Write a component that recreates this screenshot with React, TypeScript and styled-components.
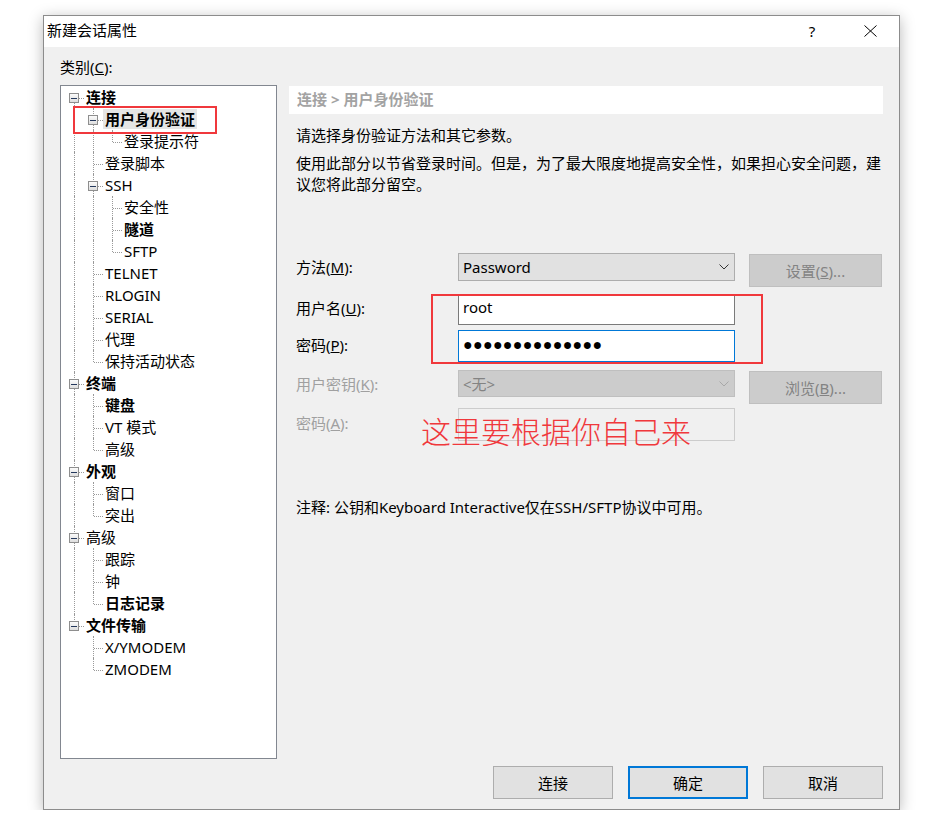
import React from "react";
import styled, { createGlobalStyle, css } from "styled-components";

const GlobalStyle = createGlobalStyle`
  html, body {
    margin: 0;
    padding: 0;
    background: #ffffff;
  }
  body {
    font-family: "Noto Sans", "Noto Sans CJK SC", sans-serif;
    font-size: 15px;
    color: #000000;
  }
`;

const Page = styled.div`
  padding: 15px 0 0 43px;
`;

const Window = styled.div`
  position: relative;
  width: 857px;
  box-sizing: border-box;
  border: 1px solid #8c8c8c;
  background: #f0f0f0;
  box-shadow: 0 3px 14px rgba(0, 0, 0, 0.28);
`;

const TitleBar = styled.div`
  display: flex;
  align-items: center;
  height: 31px;
  background: #ffffff;
  padding-left: 3px;
`;

const Title = styled.span`
  font-size: 15px;
  line-height: 20px;
  flex: 1;
  margin-bottom: 3px;
`;

const CaptionButton = styled.span`
  width: 58px;
  height: 31px;
  display: flex;
  align-items: center;
  justify-content: center;
  font-size: 15px;
  color: #000;
  padding-bottom: 2px;
  box-sizing: border-box;
`;

const Body = styled.div`
  display: grid;
  grid-template-columns: 217px 594px;
  grid-template-areas:
    "label ."
    "tree panel"
    "footer footer";
  column-gap: 12px;
  padding: 11px 15px 10px 16px;
`;

const CategoryLabel = styled.div`
  grid-area: label;
  line-height: 20px;
  height: 20px;
  margin-bottom: 7px;
  margin-top: -1px;
  padding-bottom: 1px;
`;

const TreeBox = styled.div`
  grid-area: tree;
  height: 674px;
  box-sizing: border-box;
  border: 1px solid #828790;
  background: #ffffff;
  padding: 0 0 0 4px;
`;

const TreeRow = styled.div`
  display: flex;
  align-items: center;
  height: 22px;
`;

const dotted = "1px dotted #9a9a9a";

const Guide = styled.span<{ $line: boolean }>`
  position: relative;
  flex: none;
  width: 19px;
  height: 22px;
  ${(p) =>
    p.$line &&
    css`
      &::before {
        content: "";
        position: absolute;
        left: 9px;
        top: 0;
        bottom: 0;
        border-left: ${dotted};
      }
    `}
`;

const Branch = styled.span<{ $up: boolean; $down: boolean }>`
  position: relative;
  flex: none;
  width: 19px;
  height: 22px;
  &::before {
    content: "";
    position: absolute;
    left: 9px;
    top: ${(p) => (p.$up ? "0" : "12px")};
    bottom: ${(p) => (p.$down ? "0" : "10px")};
    border-left: ${dotted};
  }
  &::after {
    content: "";
    position: absolute;
    left: 10px;
    right: 0;
    top: 12px;
    border-top: ${dotted};
  }
`;

const Expander = styled.span`
  position: absolute;
  z-index: 1;
  left: 4px;
  top: 7px;
  width: 10px;
  height: 10px;
  box-sizing: border-box;
  border: 1px solid #8e8e8e;
  background: linear-gradient(#fbfbfb, #dedede);
  &::after {
    content: "";
    position: absolute;
    left: 1px;
    right: 1px;
    top: 4px;
    border-top: 1px solid #24385c;
  }
`;

const NodeLabel = styled.span<{ $bold?: boolean; $selected?: boolean }>`
  padding: 0 2px;
  line-height: 20px;
  height: 20px;
  white-space: nowrap;
  font-weight: ${(p) => (p.$bold ? 700 : 400)};
  background: ${(p) => (p.$selected ? "#e5e5e5" : "transparent")};
`;

const Panel = styled.div`
  grid-area: panel;
  display: flex;
  flex-direction: column;
`;

const Breadcrumb = styled.div`
  height: 28px;
  line-height: 27px;
  background: #ffffff;
  padding-left: 8px;
  font-weight: 700;
  color: #a3a3a3;
  margin-top: 1px;
`;

const Para = styled.div<{ $top: number }>`
  margin-top: ${(p) => p.$top}px;
  padding-left: 7px;
  line-height: 21px;
  white-space: nowrap;
`;

const FormRow = styled.div<{ $top: number; $h: number }>`
  display: flex;
  align-items: flex-start;
  margin-top: ${(p) => p.$top}px;
  height: ${(p) => p.$h}px;
  padding-left: 7px;
`;

const FieldLabel = styled.span<{ $disabled?: boolean; $h: number }>`
  width: 162px;
  flex: none;
  line-height: ${(p) => p.$h}px;
  color: ${(p) => (p.$disabled ? "#a0a0a0" : "#000")};
`;

const Select = styled.div<{ $disabled?: boolean; $h: number }>`
  width: 277px;
  height: ${(p) => p.$h}px;
  box-sizing: border-box;
  display: flex;
  align-items: center;
  justify-content: space-between;
  padding: 0 5px 0 4px;
  border: 1px solid ${(p) => (p.$disabled ? "#bfbfbf" : "#adadad")};
  background: ${(p) => (p.$disabled ? "#cccccc" : "#e1e1e1")};
  color: ${(p) => (p.$disabled ? "#838383" : "#000")};
`;

const TextBox = styled.div<{ $h: number; $focused?: boolean; $disabled?: boolean }>`
  width: 277px;
  height: ${(p) => p.$h}px;
  box-sizing: border-box;
  padding: 0 4px;
  line-height: 22px;
  border: 1px solid
    ${(p) => (p.$focused ? "#0078d7" : p.$disabled ? "#cccccc" : "#7a7a7a")};
  background: ${(p) => (p.$disabled ? "#f0f0f0" : "#ffffff")};
`;

const Dots = styled.span`
  font-family: "Liberation Sans", sans-serif;
  font-size: 16px;
  line-height: 27px;
  letter-spacing: 0.3px;
`;

const SideButton = styled.div<{ $h: number; $top: number }>`
  margin-left: 14px;
  margin-top: ${(p) => p.$top}px;
  width: 133px;
  height: ${(p) => p.$h}px;
  box-sizing: border-box;
  display: flex;
  align-items: center;
  justify-content: center;
  border: 1px solid #bfbfbf;
  background: #cccccc;
  color: #838383;
`;

const Note = styled.div`
  margin-top: 56px;
  padding-left: 7px;
  line-height: 21px;
  white-space: nowrap;
`;

const Footer = styled.div`
  grid-area: footer;
  display: flex;
  justify-content: flex-end;
  gap: 15px;
  margin-top: 7px;
`;

const DialogButton = styled.div<{ $primary?: boolean }>`
  width: 120px;
  height: 33px;
  box-sizing: border-box;
  display: flex;
  align-items: center;
  justify-content: center;
  background: #e1e1e1;
  border: ${(p) => (p.$primary ? "2px solid #0078d7" : "1px solid #adadad")};
  padding-bottom: 1px;
`;

const RedBox = styled.div<{ $l: number; $t: number; $w: number; $h: number }>`
  position: absolute;
  left: ${(p) => p.$l}px;
  top: ${(p) => p.$t}px;
  width: ${(p) => p.$w}px;
  height: ${(p) => p.$h}px;
  box-sizing: border-box;
  border: 2px solid #f0383c;
  pointer-events: none;
`;

const RedNote = styled.div`
  position: absolute;
  left: 377px;
  top: 399px;
  font-family: "Noto Sans CJK SC", sans-serif;
  font-weight: 300;
  font-size: 30px;
  line-height: 30px;
  color: #f0383c;
  white-space: nowrap;
`;

const Chevron: React.FC<{ color: string }> = ({ color }) => (
  <svg width="10" height="6" viewBox="0 0 10 6">
    <polyline points="0.5,0.5 5,5 9.5,0.5" fill="none" stroke={color} strokeWidth="1" />
  </svg>
);

type TreeNode = {
  label: string;
  bold?: boolean;
  selected?: boolean;
  children?: TreeNode[];
};

const tree: TreeNode[] = [
  {
    label: "连接",
    bold: true,
    children: [
      { label: "用户身份验证", bold: true, selected: true, children: [{ label: "登录提示符" }] },
      { label: "登录脚本" },
      {
        label: "SSH",
        children: [{ label: "安全性" }, { label: "隧道", bold: true }, { label: "SFTP" }],
      },
      { label: "TELNET" },
      { label: "RLOGIN" },
      { label: "SERIAL" },
      { label: "代理" },
      { label: "保持活动状态" },
    ],
  },
  {
    label: "终端",
    bold: true,
    children: [{ label: "键盘", bold: true }, { label: "VT 模式" }, { label: "高级" }],
  },
  { label: "外观", bold: true, children: [{ label: "窗口" }, { label: "突出" }] },
  {
    label: "高级",
    children: [{ label: "跟踪" }, { label: "钟" }, { label: "日志记录", bold: true }],
  },
  { label: "文件传输", bold: true, children: [{ label: "X/YMODEM" }, { label: "ZMODEM" }] },
];

type FlatRow = {
  node: TreeNode;
  guides: boolean[];
  up: boolean;
  down: boolean;
};

// turn the nested tree into display rows, keeping which ancestor lines continue
const flatten = (nodes: TreeNode[], guides: boolean[], root: boolean): FlatRow[] =>
  nodes.flatMap((node, i) => {
    const last = i === nodes.length - 1;
    const row: FlatRow = { node, guides, up: !(root && i === 0), down: !last };
    const kids = node.children ? flatten(node.children, [...guides, !last], false) : [];
    return [row, ...kids];
  });

const rows = flatten(tree, [], true);

const App: React.FC = () => (
  <Page>
    <GlobalStyle />
    <Window>
      <TitleBar>
        <Title>新建会话属性</Title>
        <CaptionButton>?</CaptionButton>
        <CaptionButton>
          <svg width="13" height="12" viewBox="0 0 13 12">
            <path d="M0.5 0.5 L12.5 11.5 M12.5 0.5 L0.5 11.5" stroke="#000" strokeWidth="1" />
          </svg>
        </CaptionButton>
      </TitleBar>
      <Body>
        <CategoryLabel>
          类别(<u>C</u>):
        </CategoryLabel>
        <TreeBox>
          {rows.map((r, i) => (
            <TreeRow key={i}>
              {r.guides.map((g, j) => (
                <Guide key={j} $line={g} />
              ))}
              <Branch $up={r.up} $down={r.down}>
                {r.node.children && <Expander />}
              </Branch>
              <NodeLabel $bold={r.node.bold} $selected={r.node.selected}>
                {r.node.label}
              </NodeLabel>
            </TreeRow>
          ))}
        </TreeBox>
        <Panel>
          <Breadcrumb>连接 &gt; 用户身份验证</Breadcrumb>
          <Para $top={11}>请选择身份验证方法和其它参数。</Para>
          <Para $top={7}>
            使用此部分以节省登录时间。但是，为了最大限度地提高安全性，如果担心安全问题，建
            <br />
            议您将此部分留空。
          </Para>
          <FormRow $top={58} $h={34}>
            <FieldLabel $h={28}>
              方法(<u>M</u>):
            </FieldLabel>
            <Select $h={28}>
              <span>Password</span>
              <Chevron color="#333" />
            </Select>
            <SideButton $h={33} $top={1}>
              设置(<u>S</u>)...
            </SideButton>
          </FormRow>
          <FormRow $top={8} $h={30}>
            <FieldLabel $h={27}>
              用户名(<u>U</u>):
            </FieldLabel>
            <TextBox $h={30}>root</TextBox>
          </FormRow>
          <FormRow $top={5} $h={32}>
            <FieldLabel $h={30}>
              密码(<u>P</u>):
            </FieldLabel>
            <TextBox $h={32} $focused>
              <Dots>●●●●●●●●●●●●●●</Dots>
            </TextBox>
          </FormRow>
          <FormRow $top={8} $h={34}>
            <FieldLabel $h={28} $disabled>
              用户密钥(<u>K</u>):
            </FieldLabel>
            <Select $h={27} $disabled>
              <span>&lt;无&gt;</span>
              <Chevron color="#a8a8a8" />
            </Select>
            <SideButton $h={33} $top={1}>
              浏览(<u>B</u>)...
            </SideButton>
          </FormRow>
          <FormRow $top={4} $h={33}>
            <FieldLabel $h={30} $disabled>
              密码(<u>A</u>):
            </FieldLabel>
            <TextBox $h={33} $disabled />
          </FormRow>
          <Note>注释: 公钥和Keyboard Interactive仅在SSH/SFTP协议中可用。</Note>
        </Panel>
        <Footer>
          <DialogButton>连接</DialogButton>
          <DialogButton $primary>确定</DialogButton>
          <DialogButton>取消</DialogButton>
        </Footer>
      </Body>
      <RedBox $l={29} $t={90} $w={144} $h={28} />
      <RedBox $l={387} $t={278} $w={332} $h={70} />
      <RedNote>这里要根据你自己来</RedNote>
    </Window>
  </Page>
);

export default App;
